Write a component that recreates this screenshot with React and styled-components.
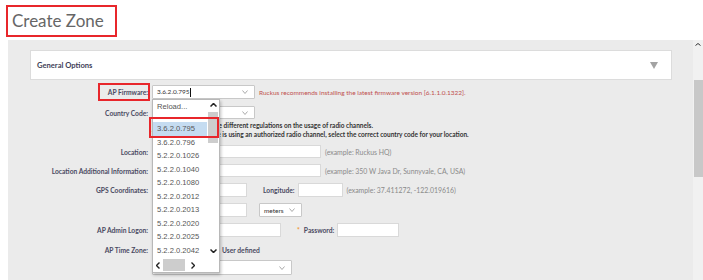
import React from "react";
import styled, { createGlobalStyle } from "styled-components";

const GlobalStyle = createGlobalStyle`
  html, body { margin: 0; padding: 0; background: #fff; }
  body { font-family: Lato, "Liberation Sans", sans-serif; }
`;

const Page = styled.div`
  width: 703px;
  height: 280px;
  overflow: hidden;
  display: flex;
  flex-direction: column;
`;

const Header = styled.header`
  height: 40px;
  flex: none;
  box-sizing: border-box;
  padding: 5px 0 0 6px;
`;

const TitleBox = styled.h1`
  margin: 0;
  width: 111px;
  height: 32px;
  box-sizing: border-box;
  border: 2px solid #e8262b;
  padding: 0 0 0 4px;
  font-family: Lato, sans-serif;
  font-weight: 400;
  font-size: 17px;
  line-height: 28px;
  color: #666;
`;

const Body = styled.div`
  flex: 1;
  display: flex;
  padding-left: 8px;
  min-height: 0;
`;

const Main = styled.main`
  flex: 1;
  background: #ebebeb;
  padding: 10px 21px 0 22px;
`;

const Card = styled.div`
  height: 30px;
  box-sizing: border-box;
  background: #fff;
  border: 1px solid #dcdcdc;
  display: flex;
  align-items: center;
  justify-content: space-between;
  padding: 0 13px 0 6px;
`;

const CardTitle = styled.span`
  font-weight: 700;
  font-size: 7.6px;
  color: #3e3e58;
`;

const Form = styled.div`
  display: flex;
  flex-direction: column;
`;

const Row = styled.div`
  display: flex;
  align-items: center;
  height: ${p => p.h || 14}px;
  margin-top: ${p => p.mt || 0}px;
`;

const Label = styled.div`
  width: 122px;
  flex: none;
  box-sizing: border-box;
  padding-right: 4px;
  text-align: right;
  font-weight: 700;
  font-size: 6.7px;
  color: #4a4a62;
`;

const LabelText = styled.span`
  position: relative;
  ${p => p.marked && `
    &::after {
      content: "";
      position: absolute;
      left: -10px;
      right: -2px;
      top: -5px;
      bottom: -5px;
      border: 2px solid #e8262b;
    }
  `}
`;

const Field = styled.div`
  display: flex;
  align-items: center;
  position: relative;
  height: 100%;
`;

const TextInput = styled.div`
  width: ${p => p.w}px;
  height: 100%;
  box-sizing: border-box;
  background: #fff;
  border: 1px solid #d9d9d9;
  margin-left: ${p => p.ml || 0}px;
`;

const SelectBox = styled.div`
  width: ${p => p.w}px;
  height: 100%;
  box-sizing: border-box;
  background: #fff;
  border: 1px solid #c8c8c8;
  border-radius: 1px;
  margin-left: ${p => p.ml || 0}px;
  display: flex;
  align-items: center;
  justify-content: space-between;
  padding: 0 6px 0 4px;
  font-size: 6.5px;
  color: #333;
`;

const Caret = styled.span`
  display: inline-block;
  width: 1px;
  height: 9px;
  background: #111;
  vertical-align: middle;
`;

const Hint = styled.span`
  margin-left: ${p => p.ml || 4}px;
  font-size: 6.9px;
  color: #8a8a8a;
  white-space: nowrap;
`;

const Warning = styled.span`
  margin-left: 4px;
  font-size: 6.5px;
  color: #c0504d;
  white-space: nowrap;
`;

const SubLabel = styled.span`
  margin-left: ${p => p.ml || 0}px;
  font-weight: 700;
  font-size: 6.7px;
  color: #4a4a62;
  white-space: nowrap;
`;

const Required = styled.span`
  color: #f0962e;
  margin-right: 4px;
`;

const InfoText = styled.div`
  font-weight: 700;
  font-size: 6.5px;
  line-height: 9px;
  color: #333;
  white-space: nowrap;
`;

const Radio = styled.span`
  width: 7px;
  height: 7px;
  box-sizing: border-box;
  border-radius: 50%;
  border: 1px solid #999;
  background: #fff;
  margin: ${p => p.m || "0 3px 0 0"};
`;

const Dropdown = styled.div`
  position: absolute;
  top: 14px;
  left: 0;
  width: 68px;
  height: 174px;
  box-sizing: border-box;
  background: #fff;
  border: 1px solid #b8b8b8;
  box-shadow: 1px 2px 3px rgba(0, 0, 0, 0.25);
  z-index: 10;
  display: flex;
  flex-direction: column;
`;

const DropBody = styled.div`
  display: flex;
  height: 158px;
`;

const Options = styled.div`
  flex: 1;
  display: flex;
  flex-direction: column;
`;

const Option = styled.div`
  position: relative;
  height: ${p => p.h || 13.5}px;
  line-height: ${p => p.h || 13.5}px;
  padding-left: 4px;
  font-family: "Liberation Sans", Arial, sans-serif;
  font-size: 7.6px;
  color: #555;
  background: ${p => (p.selected ? "#c5dcf1" : "transparent")};
  ${p => p.marked && `
    &::after {
      content: "";
      position: absolute;
      left: -4px;
      right: -12px;
      top: -5px;
      bottom: -2px;
      border: 2px solid #e8262b;
      z-index: 2;
    }
  `}
`;

const Spacer = styled.div`
  height: 9px;
`;

const VScroll = styled.div`
  width: 12px;
  display: flex;
  flex-direction: column;
  align-items: center;
`;

const ScrollBtn = styled.div`
  height: ${p => p.h || 10}px;
  width: 100%;
  display: flex;
  align-items: center;
  justify-content: center;
`;

const VThumb = styled.div`
  width: 10px;
  height: 31px;
  margin-top: 2px;
  margin-bottom: auto;
  background: #cdcdcd;
`;

const HScroll = styled.div`
  flex: 1;
  display: flex;
  align-items: center;
  padding-left: 3px;
`;

const HThumb = styled.div`
  width: 22px;
  height: 12px;
  background: #cdcdcd;
  margin: 0 6px 0 3px;
`;

const PageScroll = styled.div`
  width: 10px;
  flex: none;
  background: #f1f1f1;
  display: flex;
  flex-direction: column;
  align-items: center;
`;

const PageThumb = styled.div`
  width: 9px;
  height: 97px;
  margin-top: 32px;
  margin-left: 1px;
  background: #c8c8c8;
`;

const Chevron = ({ dir = "down", color = "#aaa", w = 6, h = 4, sw = 1 }) => {
  const pts = {
    down: `0.5,0.5 ${w / 2},${h - 0.5} ${w - 0.5},0.5`,
    up: `0.5,${h - 0.5} ${w / 2},0.5 ${w - 0.5},${h - 0.5}`,
    left: `${w - 0.5},0.5 0.5,${h / 2} ${w - 0.5},${h - 0.5}`,
    right: `0.5,0.5 ${w - 0.5},${h / 2} 0.5,${h - 0.5}`,
  }[dir];
  return (
    <svg width={w} height={h} viewBox={`0 0 ${w} ${h}`}>
      <polyline points={pts} fill="none" stroke={color} strokeWidth={sw} />
    </svg>
  );
};

const firmwares = [
  "3.6.2.0.796",
  "5.2.2.0.1026",
  "5.2.2.0.1040",
  "5.2.2.0.1080",
  "5.2.2.0.2012",
  "5.2.2.0.2013",
  "5.2.2.0.2020",
  "5.2.2.0.2025",
  "5.2.2.0.2042",
];

const FirmwareList = () => (
  <Dropdown>
    <DropBody>
      <Options>
        <Option h={13}>Reload...</Option>
        <Spacer />
        <Option selected marked>3.6.2.0.795</Option>
        {firmwares.map(v => (
          <Option key={v}>{v}</Option>
        ))}
      </Options>
      <VScroll>
        <ScrollBtn h={10}>
          <Chevron dir="up" color="#222" w={7} h={4} sw={1.5} />
        </ScrollBtn>
        <VThumb />
        <ScrollBtn h={14}>
          <Chevron dir="down" color="#222" w={7} h={4} sw={1.5} />
        </ScrollBtn>
      </VScroll>
    </DropBody>
    <HScroll>
      <Chevron dir="left" color="#222" w={4} h={7} sw={1.4} />
      <HThumb />
      <Chevron dir="right" color="#222" w={4} h={7} sw={1.4} />
    </HScroll>
  </Dropdown>
);

export default function App() {
  return (
    <Page>
      <GlobalStyle />
      <Header>
        <TitleBox>Create Zone</TitleBox>
      </Header>
      <Body>
        <Main>
          <Card>
            <CardTitle>General Options</CardTitle>
            <svg width="8" height="7" viewBox="0 0 8 7">
              <polygon points="0,0 8,0 4,7" fill="#a3a3a3" />
            </svg>
          </Card>
          <Form>
            <Row mt={5} h={14}>
              <Label><LabelText marked>AP Firmware:</LabelText></Label>
              <Field>
                <SelectBox w={103}>
                  <span>3.6.2.0.795<Caret /></span>
                  <Chevron />
                </SelectBox>
                <Warning>Ruckus recommends installing the latest firmware version [6.1.1.0.1322].</Warning>
                <FirmwareList />
              </Field>
            </Row>
            <Row mt={7} h={13}>
              <Label>Country Code:</Label>
              <Field>
                <SelectBox w={103}>
                  <span />
                  <Chevron />
                </SelectBox>
              </Field>
            </Row>
            <Row mt={2} h={18}>
              <Label />
              <div>
                <InfoText>Different countries have different regulations on the usage of radio channels.</InfoText>
                <InfoText>To ensure that this zone is using an authorized radio channel, select the correct country code for your location.</InfoText>
              </div>
            </Row>
            <Row mt={6} h={13}>
              <Label>Location:</Label>
              <Field>
                <TextInput w={169} />
                <Hint>(example: Ruckus HQ)</Hint>
              </Field>
            </Row>
            <Row mt={6} h={13}>
              <Label>Location Additional Information:</Label>
              <Field>
                <TextInput w={169} />
                <Hint>(example: 350 W Java Dr, Sunnyvale, CA, USA)</Hint>
              </Field>
            </Row>
            <Row mt={6} h={14}>
              <Label>GPS Coordinates:</Label>
              <Field>
                <TextInput w={95} />
                <SubLabel ml={16}>Longitude:</SubLabel>
                <TextInput w={45} ml={3} />
                <Hint>(example: 37.411272, -122.019616)</Hint>
              </Field>
            </Row>
            <Row mt={6} h={14}>
              <Label />
              <Field>
                <TextInput w={95} />
                <SelectBox w={43} ml={12}>
                  <span>meters</span>
                  <Chevron />
                </SelectBox>
              </Field>
            </Row>
            <Row mt={6} h={14}>
              <Label>AP Admin Logon:</Label>
              <Field>
                <TextInput w={129} />
                <SubLabel ml={16}><Required>*</Required>Password:</SubLabel>
                <TextInput w={62} ml={3} />
              </Field>
            </Row>
            <Row mt={8} h={10}>
              <Label>AP Time Zone:</Label>
              <Field>
                <Radio />
                <Radio m="0 3px 0 50px" />
                <SubLabel>User defined</SubLabel>
              </Field>
            </Row>
            <Row mt={5} h={15}>
              <Label />
              <Field>
                <SelectBox w={140}>
                  <span />
                  <Chevron />
                </SelectBox>
              </Field>
            </Row>
          </Form>
        </Main>
        <PageScroll>
          <ScrollBtn h={8}>
            <Chevron dir="up" color="#333" w={6} h={3} sw={1} />
          </ScrollBtn>
          <PageThumb />
        </PageScroll>
      </Body>
    </Page>
  );
}
